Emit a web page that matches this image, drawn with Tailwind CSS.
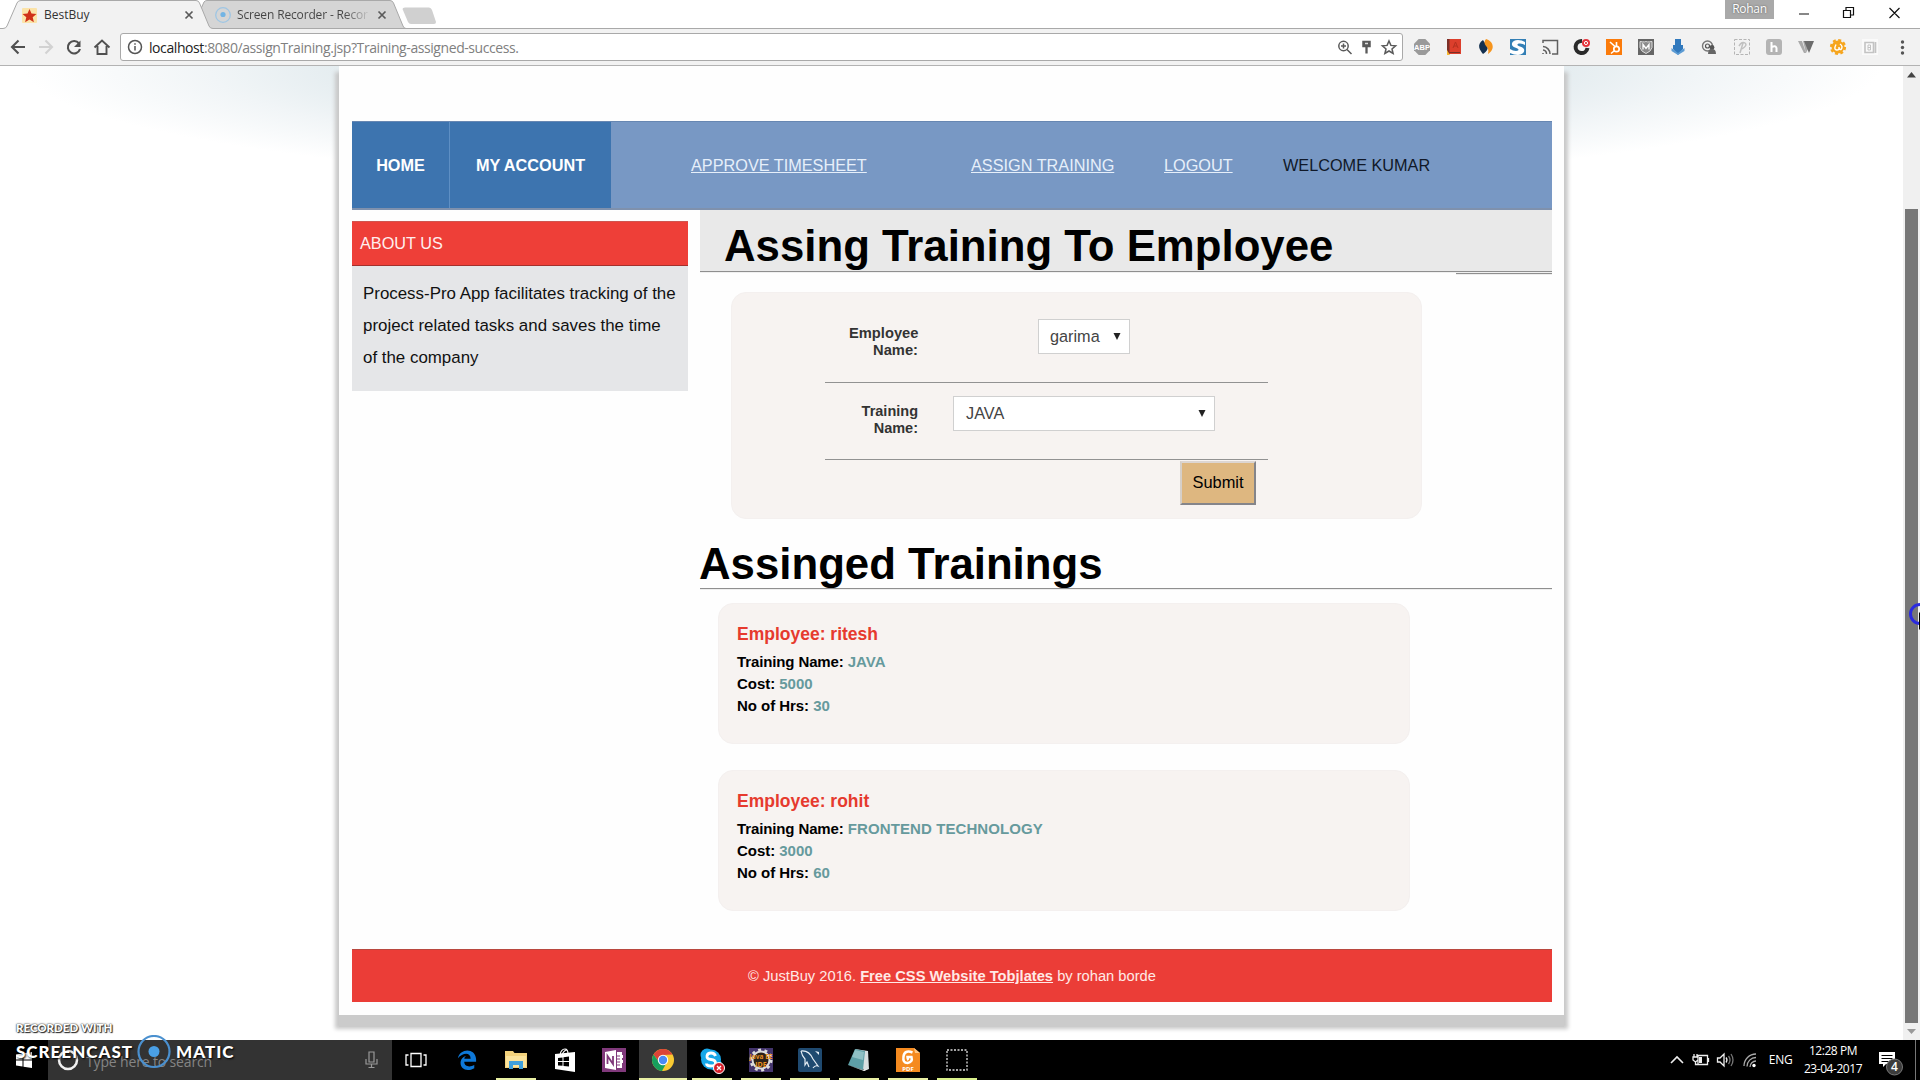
<!DOCTYPE html>
<html lang="en">
<head>
<meta charset="utf-8">
<title>BestBuy</title>
<script src="https://cdn.jsdelivr.net/npm/@tailwindcss/browser@4"></script>
</head>
<body class="relative flex h-[1080px] w-[1920px] flex-col overflow-hidden bg-white font-['Liberation_Sans',Arial,sans-serif] text-[16.25px] text-black">

<!-- Tab strip -->
<header class="relative h-7 shrink-0 font-['Open_Sans','Noto_Sans',sans-serif]">
  <svg class="absolute inset-0" width="1920" height="29" fill="none">
    <path d="M205 28.500L199.500 12 204 2Q205 .5 207 .5H390Q392.500 .5 393.500 3L403 26Q404 28.500 406 28.500Z" fill="#d5d5d5" stroke="#a9a9a9"/>
    <path d="M405 7.500H429Q431 7.500 432 10L436 22Q436 24 434 24H411Q409 24 408 22L402.500 9Q402.500 7.500 405 7.500Z" fill="#d0d0d0"/>
    <path d="M0 28.500H3Q6 28.500 7 26L17 3Q18 .5 21 .5H196Q198.500 .5 199.500 3L209 26Q210 28.500 213 28.500V29H0Z" fill="#f2f2f2"/>
    <path d="M0 28.500H3Q6 28.500 7 26L17 3Q18 .5 21 .5H196Q198.500 .5 199.500 3L209 26Q210 28.500 213 28.500H1920" stroke="#a9a9a9"/>
    <rect x="22" y="8" width="15" height="15" rx="1" fill="#fbe3a8"/>
    <path d="M29.500 9l2 4.600 5 .4-3.800 3.300 1.200 4.900-4.400-2.600-4.400 2.600 1.200-4.900-3.800-3.300 5-.4z" fill="#d03018"/>
    <circle cx="223" cy="15" r="7.300" stroke="#9fc6e4" stroke-width="1.300"/><circle cx="223" cy="14.500" r="2.600" fill="#72b4e4"/>
    <path d="M185.500 11.500l7 7m0-7l-7 7M378.500 11.500l7 7m0-7l-7 7" stroke="#5a5a5a" stroke-width="1.700"/>
  </svg>
  <div class="relative flex h-7 items-center pt-0.5 text-[12px] leading-4">
    <span class="ml-11 w-[193px] text-[#333]">BestBuy</span>
    <span class="w-[134px] bg-linear-to-r from-[#444] from-80% to-transparent bg-clip-text tracking-[-0.150px] whitespace-nowrap text-transparent">Screen Recorder - Recor</span>
    <span class="-mt-3 ml-auto flex h-[19px] w-[49px] items-center justify-center bg-[#a9a9a9] text-[12px] tracking-[-0.300px] text-white [text-shadow:0_0_2px_#555]">Rohan</span>
    <svg class="-mt-1 ml-6" width="122" height="16" fill="none" stroke="#111" stroke-width="1.200"><path d="M1 9h10M45.500 5.500h7v7h-7zM48 5V2.500h7.500v7.500H53M91.500 3l10 10m0-10l-10 10"/></svg>
  </div>
</header>

<!-- Toolbar -->
<div class="flex h-[38px] shrink-0 items-center border-b border-[#b3b3b3] bg-[#f2f2f2] font-['Open_Sans','Noto_Sans',sans-serif]">
  <svg width="120" height="36" viewBox="0 29 120 36" fill="none" stroke-width="2.100" stroke="#505050">
    <path d="M25 47H12.500M18.500 40.500L12 47l6.500 6.500"/>
    <path d="M39 47h12.500M45.500 40.500L52 47l-6.500 6.500" stroke="#d2d2d2"/>
    <path d="M79 43.500A6.200 6.200 0 1 0 80 49"/><path d="M80.500 40.500v6.500h-6.500z" fill="#505050" stroke="none"/>
    <path d="M94.500 47.500L102 40.500l7.500 7M97.500 46v8h9v-8" stroke-width="1.900"/>
  </svg>
  <div class="flex h-[28px] w-[1283px] items-center rounded-[3px] border border-[#a9a9a9] bg-white pl-[6px]">
    <svg width="16" height="16" fill="none" stroke="#555" stroke-width="1.500"><circle cx="8" cy="8" r="6.500"/><path d="M8 7v4.500M8 4.200v1.600"/></svg>
    <span class="mt-px ml-1.5 text-[14px] tracking-[-0.420px] whitespace-nowrap text-[#808080]"><span class="text-[#222]">localhost</span>:8080/assignTraining.jsp?Training-assigned-success.</span>
    <svg class="ml-auto" width="66" height="20" viewBox="1336 36.500 66 20" fill="none" stroke="#5a5a5a" stroke-width="1.500">
      <circle cx="1343.500" cy="45.500" r="4.700"/><path d="M1347 49l4.500 4.500M1341 45.500h5M1343.500 43v5"/>
      <path d="M1363 41h7v5h-7z" fill="#5a5a5a"/><path d="M1365 43h3" stroke="#ddd"/><path d="M1366.500 46v7" stroke-width="2.300"/>
      <path d="M1389 40.500l1.900 4.400 4.700.4-3.600 3.100 1.100 4.600-4.100-2.500-4.100 2.500 1.100-4.600-3.600-3.100 4.700-.4z"/>
    </svg>
  </div>
  <svg width="517" height="36" viewBox="1403 29 517 36" fill="none">
    <path d="M1418.700 39h6.600l4.700 4.700v6.600l-4.700 4.700h-6.600l-4.700-4.700v-6.600z" fill="#9a9a9a"/><text x="1422" y="50" text-anchor="middle" font-size="7.500" font-weight="700" fill="#fff" font-family="Liberation Sans">ABP</text>
    <path d="M1447 39h14v15h-14z" fill="#dc3f2c"/><path d="M1447 39h2.500v15h-2.500z" fill="#7b3028"/><path d="M1448 52.500h12" stroke="#7b3028"/><path d="M1447 50v5h3z" fill="#f5b731"/><path d="M1453 48l2.500-6 2.500 6M1454 46h3" stroke="#b5301f"/>
    <path d="M1483 40c-7 5-3 10 0 14 5-3 6-7 3-10q-2-2-3-4z" fill="#14304f"/><path d="M1486 39c7 2 10 10 2 15 1-4 0-6-2-8s-2-5 0-7z" fill="#f6951e"/>
    <path d="M1510 39h16v16h-16z" fill="#337fb5"/><path d="M1525 42q-3-2-7-2c-7 0-8 6-3 7.500 4 1 5 3 1 3.500q-3 0-6-2v4q4 2 8 2c8-1 8-7 2-8.500-4-1-3-3 0-3q3 0 5 1.500z" fill="#fff"/>
    <path d="M1543 43v-2.500h14.500v13.500H1552M1543 46.500a7.500 7.500 0 0 1 7 7.500M1543 50a4 4 0 0 1 3.500 4M1543 53v1" stroke="#606060" stroke-width="1.500"/>
    <path d="M1582 41a6 6 0 1 0 5.500 7" stroke="#2a2a2a" stroke-width="4"/><circle cx="1586" cy="43" r="4" fill="#e5343c"/><circle cx="1586" cy="43" r="1.600" stroke="#fff"/>
    <path d="M1606 39h16v16h-16z" fill="#fb7b0b"/><circle cx="1616.500" cy="49" r="2.700" stroke="#fff" stroke-width="1.700"/><path d="M1610 42l5 4.500M1616.500 42v4M1614 51l-3 2.500" stroke="#fff" stroke-width="1.600"/>
    <path d="M1638 39h16v16h-16z" fill="#666"/><path d="M1640 41.500q6 1 6-.5 0 1.500 6 .5v6q-1 4-6 6-5-2-6-6z" fill="#8c8c8c" stroke="#ddd"/><path d="M1643 49.500v-5l3 4 3-4v5" stroke="#fff" stroke-width="1.300"/>
    <path d="M1675 39h6v6h2v4l-5 6-5-6v-4h2z" fill="#3179bd"/><path d="M1671.500 48v3l6.500 4 6.500-4v-3l-6.500 5z" fill="#5c9bd3"/>
    <circle cx="1707.500" cy="46" r="5" stroke="#777" stroke-width="1.400"/><circle cx="1707.500" cy="46" r="2" stroke="#555" stroke-width="1.200"/><circle cx="1712" cy="47.500" r="2.400" fill="#555"/><path d="M1708 54q0-5 4-5t4 5z" fill="#666"/>
    <path d="M1734.500 39.500h15v15h-15z" stroke="#b5b5b5" stroke-dasharray="3 1.500"/><path d="M1740 53l3-10M1739 46q3-5 6-3t-3 6" stroke="#c0c0c0" stroke-width="1.500"/>
    <rect x="1766" y="39" width="16" height="16" rx="3" fill="#b4b4b4"/><path d="M1771.500 42v10M1776.500 52v-4q-1-3-4.500-1" stroke="#fff" stroke-width="2"/>
    <path d="M1798 41h4l4 12h-2zM1803 41h3l2 8-2 4z" fill="#aaa"/><path d="M1804 41h10l-5 12z" fill="#6c6c6c"/>
    <circle cx="1838" cy="47" r="6.500" fill="#f6a51d"/><circle cx="1838" cy="47" r="7" stroke="#f6a51d" stroke-width="2.200" stroke-dasharray="3 2.500"/><path d="M1836 44.500q-2.500 5 .5 5.500t2.500-3q0 3 2 2.500 2.500-3-1-5.500" stroke="#fff" stroke-width="1.400"/>
    <path d="M1862 39h16v16h-16z" fill="#fafafa"/><path d="M1865 42.500h8.500v10h-8.500zM1875.500 42v11" stroke="#c3c3c3" stroke-width="1.600"/><path d="M1868 45h2.500v5h-2.500zM1868 47.500h3" stroke="#c3c3c3"/>
    <g fill="#555"><circle cx="1902.500" cy="42" r="1.700"/><circle cx="1902.500" cy="47.500" r="1.700"/><circle cx="1902.500" cy="53" r="1.700"/></g>
  </svg>
</div>

<!-- Viewport -->
<div class="flex h-[974px] shrink-0 overflow-hidden">
  <div class="flex w-[1903px] bg-[radial-gradient(ellipse_930px_125px_at_50%_0,#dfe9ed_0%,#e5edf0_66%,#f1f5f7_80%,#ffffff_100%)] pl-[339px]">
    <div class="h-[949px] w-[1225px] bg-[#fefefe] px-3 pl-[13px] pt-[55px] shadow-[0_12px_0_0_#cbcbcb,0_10px_4px_4px_#c8c8c8]">

      <nav class="flex h-[89px] items-center border-t border-b-2 border-t-[#6787b2] border-b-[#7f91ad] bg-[#7898c4] pb-px">
        <div class="flex h-[86px] w-[98px] items-center justify-center border-r border-[#5e8fc4] bg-[#3d74af] pt-px font-bold text-white">HOME</div>
        <div class="flex h-[86px] w-[161px] items-center justify-center bg-[#3d74af] pt-px font-bold text-white">MY ACCOUNT</div>
        <a class="mt-0.5 ml-[80px] w-[280px] text-[#e6effa] underline">APPROVE TIMESHEET</a>
        <a class="mt-0.5 w-[193px] text-[#e6effa] underline">ASSIGN TRAINING</a>
        <a class="mt-0.5 w-[119px] text-[#e6effa] underline">LOGOUT</a>
        <span class="mt-0.5 text-[#101828]">WELCOME KUMAR</span>
      </nav>

      <div class="flex h-[739px] gap-3">
        <aside class="mt-[11px] h-[170px] w-[336px] bg-[#e5e6e8]">
          <h3 class="flex h-[45px] items-center border-y border-t-[#cf5650] border-b-[#a3302c] bg-[#ee3f38] pl-2 text-[#ffeeee]">ABOUT US</h3>
          <p class="pt-3 pl-[11px] text-[16.900px] leading-8 whitespace-nowrap text-[#111]">Process-Pro App facilitates tracking of the<br>project related tasks and saves the time<br>of the company</p>
        </aside>

        <main class="w-[852px]">
          <h1 class="h-[61px] bg-[#e9e9e9] pt-[11px] pl-6 text-[43.750px] leading-[50px] font-bold">Assing Training To Employee</h1>
          <div class="h-0.5 border-t border-[#8f8f8f] bg-[#f0f0f0]"></div>
          <div class="ml-auto h-0.5 w-24 border-t border-[#8f8f8f] bg-[#eee]"></div>

          <form class="mt-[17px] ml-[31px] h-[227px] w-[691px] rounded-[15px] border border-[#f4f0ef] bg-[#f7f3f1] pt-[26px] pl-[93px]">
            <div class="flex h-[64px] w-[443px] border-b border-[#929292]">
              <label class="w-[93px] pt-1.5 pl-6 text-right text-[14.700px] leading-[17px] font-bold text-[#333]">Employee Name:</label>
              <div class="ml-[35px] flex w-[262px] justify-center">
                <div class="flex h-[35px] w-[92px] items-center justify-between border border-[#d0d0d0] bg-white pr-2 pl-[11px] text-[#444]">garima<svg width="8" height="9"><path d="M0.500 1h7l-3.500 7z" fill="#222"/></svg></div>
              </div>
            </div>
            <div class="flex h-[77px] w-[443px] border-b border-[#929292] pt-[13px]">
              <label class="w-[93px] pt-[7px] pl-6 text-right text-[14.500px] leading-[17px] font-bold text-[#333]">Training Name:</label>
              <div class="ml-[35px] flex h-[35px] w-[262px] items-center justify-between border border-[#d0d0d0] bg-white pr-2 pl-3 text-[#444]">JAVA<svg width="8" height="9"><path d="M0.500 1h7l-3.500 7z" fill="#222"/></svg></div>
            </div>
            <button type="button" class="mt-px ml-[355px] flex h-11 w-[76px] items-center justify-center border-2 border-t-[#ddd6d2] border-r-[#85858a] border-b-[#85858a] border-l-[#d6cfc8] bg-[#deb780] pb-0.5 text-[16.400px] text-black">Submit</button>
          </form>

          <h2 class="mt-5 -ml-px text-[43.750px] leading-[49px] font-bold">Assinged Trainings</h2>
          <div class="h-0.5 border-t border-[#8f8f8f] bg-[#eee]"></div>

          <div class="mt-[13px] ml-[18px] flex w-[692px] flex-col gap-[26px] text-[15px] leading-[22px] font-bold">
            <section class="h-[141px] rounded-[15px] border border-[#f4f0ef] bg-[#f7f3f1] pt-[19px] pl-[18px]">
              <h4 class="mb-1.5 text-[17.500px] text-[#e63a2e]">Employee: ritesh</h4>
              <p><span class="tracking-[-0.120px]">Training Name: </span><span class="text-[#669a9d]">JAVA</span></p>
              <p><span class="tracking-[-0.050px]">Cost: </span><span class="text-[#669a9d]">5000</span></p>
              <p><span class="tracking-[-0.050px]">No of Hrs: </span><span class="text-[#669a9d]">30</span></p>
            </section>
            <section class="h-[141px] rounded-[15px] border border-[#f4f0ef] bg-[#f7f3f1] pt-[19px] pl-[18px]">
              <h4 class="mb-1.5 text-[17.500px] text-[#e63a2e]">Employee: rohit</h4>
              <p><span class="tracking-[-0.120px]">Training Name: </span><span class="tracking-[0.100px] text-[#669a9d]">FRONTEND TECHNOLOGY</span></p>
              <p><span class="tracking-[-0.050px]">Cost: </span><span class="text-[#669a9d]">3000</span></p>
              <p><span class="tracking-[-0.050px]">No of Hrs: </span><span class="text-[#669a9d]">60</span></p>
            </section>
          </div>
        </main>
      </div>

      <footer class="flex h-[53px] items-center justify-center border-t border-[#b9483f] bg-[#eb3d37] text-[14.700px] text-[#ffe9e6]">
        <p>© JustBuy 2016. <a class="font-bold underline">Free CSS Website Tobjlates</a> by rohan borde</p>
      </footer>
    </div>
  </div>

  <!-- Scrollbar -->
  <div class="flex w-[17px] flex-col items-center bg-[#f0f0f0]">
    <svg class="mt-1.5" width="9" height="6"><path d="M0 5.500L4.500 0 9 5.500z" fill="#444"/></svg>
    <div class="mt-[131px] h-[814px] w-[13px] bg-[#777]"></div>
    <svg class="mt-1.5" width="9" height="6"><path d="M0 0h9L4.500 5z" fill="#999"/></svg>
  </div>
</div>

<!-- Taskbar -->
<div class="flex h-10 shrink-0 bg-black font-['Open_Sans','Noto_Sans',sans-serif] text-white">
  <div class="flex w-12 items-center justify-center"><svg width="16" height="16" fill="#fff"><path d="M0 2.500l6.500-1V7.500H0zM7.500 1.300L16 0v7.500H7.500zM0 8.500h6.500v6l-6.500-1zM7.500 8.500H16V16l-8.500-1.300z"/></svg></div>
  <div class="flex w-[344px] items-center bg-[#333] pl-[9px] text-[14px] text-[#858585]">
    <svg width="22" height="22" fill="none"><circle cx="11" cy="11" r="9" stroke="#f2f2f2" stroke-width="2.500"/></svg>
    <span class="mt-0.5 ml-[7px] tracking-[-0.150px]">Type here to search</span>
    <svg class="mr-[14px] ml-auto" width="13" height="18" fill="none" stroke="#999" stroke-width="1.200"><path d="M4 1h5v10H4zM1 8v5h11V8M6.500 13v4M3.500 16.500h6"/></svg>
  </div>
  <div class="ml-0.5 flex gap-px">
    <div class="flex w-12 items-center justify-center pr-1"><svg width="22" height="16" fill="none" stroke="#fff" stroke-width="1.300"><path d="M6 1.500h10v13H6zM3.500 3H1v10h2.500M18.500 3H21v10h-2.500"/></svg></div>
    <div class="flex w-12 items-center justify-center"><svg width="20" height="22" viewBox="0 0 22 24"><path d="M1 10C3-1 20-2 21 11v3H8c0 6 7 6 11 3.500V21C10 26 3 21 4 14c.5-4 4-6 6-6.500Q8 9 8 10.500h7C15 3 6 4 1 10z" fill="#0e78d8"/></svg></div>
    <div class="flex w-12 flex-col items-center justify-between pt-2.5"><svg width="22" height="20"><path d="M0 1h8l1.500 2H22v15H0z" fill="#f3d27c"/><path d="M1 6h20v11H1z" fill="#fbe39c"/><path d="M4 19v-8h14v8h-4v-4H8v4z" fill="#3fa0dc"/></svg><i class="h-0.5 w-10 bg-[#e9f0a4]"></i></div>
    <div class="flex w-12 items-center justify-center"><svg width="22" height="24" fill="none"><path d="M6 7Q7 1 11 1q3 0 3 5M8 7Q10 2 13 2" stroke="#fff" stroke-width="1.200"/><path d="M1 6l20-2v20L1 21z" fill="#fff"/><path d="M4 10l4.500-.5V13H4zM9.500 9.300L15 8.500V13H9.500zM4 14h4.500v3.800L4 17.500zM9.500 14H15v4.500l-5.500-.5z" fill="#000"/></svg></div>
    <div class="flex w-12 items-center justify-center"><svg width="24" height="24"><path d="M0 0h24v24H0z" fill="#80397b"/><path d="M3 4l11-2v20L3 20zM15 4h5v3h1v3h-1v2h1v3h-1v5h-5z" fill="#fff"/><path d="M5.500 16V8L11 16V8" fill="none" stroke="#80397b" stroke-width="1.800"/><path d="M15 8h3M15 11h3M15 14h3M15 17h3" stroke="#80397b"/></svg></div>
    <div class="flex w-12 flex-col items-center justify-between bg-[#373737] pt-[9px]"><svg width="22" height="22" viewBox="0 0 22 22"><circle cx="11" cy="11" r="11" fill="#f8c932"/><path d="M1.500 5.500A11 11 0 0 1 20.500 5.500L11 6 7 13z" fill="#db4437"/><path d="M1.500 5.500A11 11 0 0 0 10 22L15 13 7 13z" fill="#17a05d"/><circle cx="11" cy="11" r="5.200" fill="#fff"/><circle cx="11" cy="11" r="4.200" fill="#4a8af4"/></svg><i class="h-0.5 w-12 bg-[#e9f0a4]"></i></div>
    <div class="flex w-12 flex-col items-center justify-between pt-2"><svg width="26" height="26" fill="none"><circle cx="8" cy="7" r="6.500" fill="#17a7e8"/><circle cx="16" cy="16" r="6.500" fill="#17a7e8"/><circle cx="12" cy="11.500" r="10" fill="#17a7e8"/><path d="M16.500 8q-1-3-4.500-3T8 8t4 3.500T16.500 15t-4.500 3T7.500 15.500" stroke="#fff" stroke-width="2.800"/><circle cx="20" cy="20" r="5.500" fill="#d8202c" stroke="#fff"/><path d="M18 18l4 4m0-4l-4 4" stroke="#fff" stroke-width="1.300"/></svg><i class="h-0.5 w-10 bg-[#e9f0a4]"></i></div>
    <div class="flex w-12 flex-col items-center justify-between pt-2"><svg width="24" height="24"><path d="M0 0h24v24H0z" fill="#43346c"/><circle cx="12" cy="12" r="8.500" fill="#2b2118" stroke="#ddd" stroke-width="2"/><circle cx="12" cy="12" r="10.300" fill="none" stroke="#ddd" stroke-width="2.500" stroke-dasharray="3 3.470"/><text x="0.500" y="11" font-size="6.500" font-weight="700" fill="#e99120" textLength="23">Java EE</text><text x="12" y="19" text-anchor="middle" font-size="7" font-weight="700" fill="#e99120">IDE</text></svg><i class="h-0.5 w-10 bg-[#e9f0a4]"></i></div>
    <div class="flex w-12 flex-col items-center justify-between pt-2"><svg width="24" height="24" fill="none"><rect width="24" height="24" rx="2" fill="#1f4a70"/><path d="M3 3q8-1 12 8l5 7q-3-1-5 2M3 3q1 5 4 8v6l2-3 2 5" stroke="#e6eef5" stroke-width="1.200"/><path d="M17 3l4 1v3z" fill="#e6eef5"/></svg><i class="h-0.5 w-10 bg-[#e9f0a4]"></i></div>
    <div class="flex w-12 flex-col items-center justify-between pt-2"><svg width="24" height="24"><path d="M8 1l13 2 1 18-5 2z" fill="#d9dfe0"/><path d="M8 1l10 2-2 19L1 17z" fill="#5e9fa6"/><path d="M8 2l9 2-1 8-11-3z" fill="#8fc0c4"/><path d="M1 17l15 5 5-1-4 2z" fill="#eee"/></svg><i class="h-0.5 w-10 bg-[#e9f0a4]"></i></div>
    <div class="flex w-12 flex-col items-center justify-between pt-2"><svg width="24" height="24" fill="none"><path d="M0 0h18l6 5v19H0z" fill="#f58a1f"/><path d="M18 0l6 5h-5z" fill="#ffc684"/><path d="M16.500 4.500q-8-3-9 4-1 6.500 4 6.500 5.500-1 4-6h-4q0 2 1 3" stroke="#fff" stroke-width="2.500"/><text x="12" y="23" text-anchor="middle" font-size="6" font-weight="700" fill="#fff">PDF</text></svg><i class="h-0.5 w-10 bg-[#e9f0a4]"></i></div>
    <div class="flex w-12 flex-col items-center justify-between pt-[9px]"><svg width="22" height="22" fill="none"><path d="M1 1h20v20H1z" stroke="#ddd" stroke-width="1.300" stroke-dasharray="2 1.500"/></svg><i class="h-0.5 w-10 bg-[#d9f08c]"></i></div>
  </div>
  <svg class="ml-auto" width="96" height="40" viewBox="1670 1040 96 40" fill="none" stroke="#eee" stroke-width="1.300">
    <path d="M1671 1063l6-6 6 6" stroke-width="1.600"/>
    <path d="M1698 1055.500h9.500v9H1698zM1708.500 1058v4M1694 1054v3M1697 1054v3M1693 1057h5v3l-2.500 2-2.500-2zM1695.500 1062v2.500h3"/><path d="M1699 1057h3v6h-3z" fill="#eee" stroke="none"/>
    <path d="M1717.500 1058h2.500l4-4v12l-4-4h-2.500z"/><path d="M1726 1057.500q2 2.500 0 5"/><path d="M1728.500 1056q3 4 0 8M1731 1054q4 6 0 12" stroke="#777"/>
    <path d="M1744 1066a12 12 0 0 1 12-12M1747 1066.500a9 9 0 0 1 9-9M1750 1067a6 6 0 0 1 6-6" stroke="#aaa"/><circle cx="1754" cy="1065.500" r="1.700" fill="#fff" stroke="none"/>
  </svg>
  <div class="flex w-[30px] items-center text-[12px] tracking-[-0.300px]">&nbsp;ENG</div>
  <div class="ml-[5px] flex w-[64px] flex-col items-center justify-center text-[12px] leading-[18px] tracking-[-0.450px] whitespace-nowrap"><span>12:28 PM</span><span>23-04-2017</span></div>
  <div class="ml-[12px] flex w-[39px] border-r border-[#777]">
    <svg width="30" height="40" viewBox="1877 1040 30 40"><path d="M1879 1052h16v12h-9l-3 3v-3h-4z" fill="#fff"/><path d="M1881.500 1055.500h11M1881.500 1058.500h11M1881.500 1061.500h7" stroke="#000" stroke-width="1.200"/><circle cx="1894.500" cy="1067" r="8" fill="#3c3c3c" stroke="#777"/><text x="1894.500" y="1071" text-anchor="middle" font-size="12" font-weight="600" fill="#fff">4</text></svg>
  </div>
  <div class="w-1"></div>
</div>

<!-- Recorder watermark -->
<div class="absolute top-[1020px] left-4 w-[230px] font-[Lato,'Open_Sans',sans-serif] font-black text-white">
  <div class="text-[11.500px] leading-4 [text-shadow:0_0_2px_#333,1px_1px_1px_#222,0_0_1px_#333]">RECORDED WITH</div>
  <div class="-mt-px flex items-center text-[17px] leading-[32px] tracking-[1px] [text-shadow:1px_1px_2px_#000]">
    <span class="w-[121px]">SCREENCAST</span>
    <svg width="34" height="34" fill="none"><circle cx="17" cy="16.500" r="15.500" stroke="#4a90cf" stroke-width="2.200"/><circle cx="17" cy="16.500" r="5.500" fill="#4aa0e6"/></svg>
    <span class="ml-[5px]">MATIC</span>
  </div>
</div>

<!-- Mouse pointer with click ring -->
<svg class="absolute top-[602px] left-[1906px]" width="14" height="30" fill="none"><circle cx="14" cy="12" r="9.500" stroke="#2a2ae0" stroke-width="3"/><path d="M13 10v18l1-1V11z" fill="#000"/></svg>
</body>
</html>
